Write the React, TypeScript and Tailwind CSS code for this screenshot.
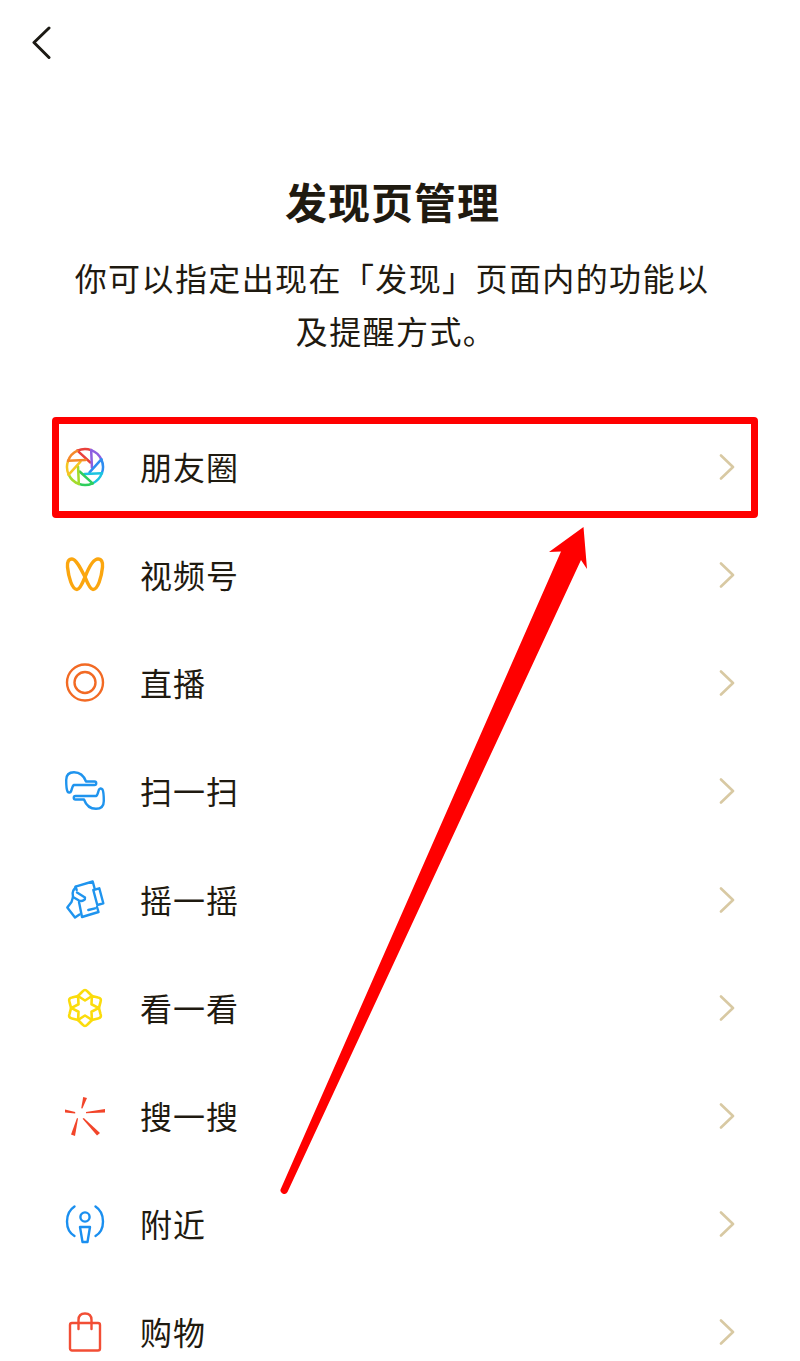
const CJK = "font-['Noto_Sans_CJK_SC','Noto_Sans',sans-serif]";

/* ── ICONS ── all drawn on a 40x40 box */
function Aperture() {
  const colors = ["#e9413c", "#8e5fe0", "#2f8df0", "#1cc4e0", "#2fce5c", "#a4dc2c", "#f6c623", "#f68a2a"];
  const pt = (r: number, deg: number) => {
    const a = (deg * Math.PI) / 180;
    return `${(20 + r * Math.cos(a)).toFixed(2)} ${(20 + r * Math.sin(a)).toFixed(2)}`;
  };
  return (
    <svg viewBox="0 0 40 40" className="w-10 h-10" fill="none" strokeWidth="2.5" strokeLinecap="round">
      {colors.map((c, i) => {
        const start = -115 + i * 45;
        return (
          <g key={c} stroke={c}>
            <path d={`M${pt(18, start)} A18 18 0 0 1 ${pt(18, start + 45)}`} />
            <path d={`M${pt(18, start)} L${pt(7, start + 75)}`} />
          </g>
        );
      })}
    </svg>
  );
}

function Channels() {
  return (
    <svg viewBox="0 0 40 40" className="w-10 h-10" fill="none" stroke="#fba60f" strokeWidth="3.4" strokeLinecap="round" strokeLinejoin="round">
      <path d="M20 22C16 14 11 4 7 4C3.5 4 2 7 2.5 12C3.5 22 7 34.5 12 34.5C15 34.5 18 27 20 22C22 17 27 4 33 4C36.5 4 38 7 37.5 12C36.5 22 33 34.5 28 34.5C25 34.5 22 27 20 22Z" />
    </svg>
  );
}

function Live() {
  return (
    <svg viewBox="0 0 40 40" className="w-10 h-10" fill="none" stroke="#f26a24" strokeWidth="2.4">
      <circle cx="20" cy="19.5" r="18" />
      <circle cx="20" cy="19.5" r="10.5" />
    </svg>
  );
}

function Scan() {
  const d = "M29.5 10.5H21C19 5 15 1.2 9 1.2C4 1.2 1.2 4 1.2 9C1.2 13 1.2 18 2.5 20.5C3.5 22 5.5 22 6.2 20C7 17.5 7.5 14.5 9 14H29.5A1.75 1.75 0 0 0 29.5 10.5Z";
  return (
    <svg viewBox="0 0 40 40" className="w-10 h-10" fill="none" stroke="#1f94ee" strokeWidth="2.4" strokeLinejoin="round">
      <path d={d} />
      <path d={d} transform="rotate(180 20 19.5)" />
    </svg>
  );
}

function Shake() {
  return (
    <svg viewBox="0 0 40 40" className="w-10 h-10" fill="none" stroke="#1f94ee" strokeWidth="2.4" strokeLinejoin="round" strokeLinecap="round">
      <path d="M11.7 10L10.5 6.7L27.7 1.5L29.5 8" />
      <path d="M14 22L17 37L33.5 32L32 27" />
      <path d="M28.3 10L34.3 8.3L38.3 23.3L32.3 25Z" />
      <path d="M11 6.7L8.3 10.5C7.5 12 7.5 15 8 17L6.5 22L2.3 27.5L10 37.5L14.5 34.5" />
      <path d="M12 12.5L20 17.5C20.5 19.5 18 22 14 20.5L8 17" />
      <path d="M23.3 30L30 28.3" />
    </svg>
  );
}

function Star() {
  return (
    <svg viewBox="0 0 40 40" className="w-10 h-10" fill="none" stroke="#fbdc0c" strokeWidth="2.6" strokeLinejoin="round">
      {[0, 60, 120, 180, 240, 300].map((r) => (
        <path key={r} d="M17.5 3.5Q20 0.5 22.5 3.5L27 8L20 12.5L13 8Z" transform={`rotate(${r} 20 20)`} />
      ))}
    </svg>
  );
}

function Search() {
  return (
    <svg viewBox="0 0 40 40" className="w-10 h-10" fill="#f2452a">
      <polygon points="16.2,12.3 17.4,12.6 22,1.9 18.2,1" />
      <polygon points="21,16.1 21,17.3 40.4,16.6 40,13" />
      <polygon points="17.6,22.8 18.8,22 35,37 32,39.6" />
      <polygon points="12,22 13,22.4 10,40 6,38.4" />
      <polygon points="0,13.4 0,16.6 10.2,17.4 10.2,16" />
    </svg>
  );
}

function Nearby() {
  return (
    <svg viewBox="0 0 40 40" className="w-10 h-10" fill="none" stroke="#1a8ff0" strokeWidth="2.4" strokeLinecap="round" strokeLinejoin="round">
      <path d="M9.5 2.5C-0.5 9 -0.5 26 9.5 32" />
      <path d="M30.5 2.5C40.5 9 40.5 26 30.5 32" />
      <circle cx="20" cy="13" r="4.6" />
      <path d="M15 23H25L22.5 38H17.5Z" />
    </svg>
  );
}

function Bag() {
  return (
    <svg viewBox="0 0 40 40" className="w-10 h-10" fill="none" stroke="#f24e35" strokeWidth="2.4" strokeLinecap="round" strokeLinejoin="round">
      <rect x="5" y="11" width="30" height="27.5" rx="2" />
      <path d="M13.5 17V8C13.5 4 16 1.5 20 1.5C24 1.5 26.5 4 26.5 8V17" />
    </svg>
  );
}

const rows = [
  { label: "朋友圈", Icon: Aperture },
  { label: "视频号", Icon: Channels },
  { label: "直播", Icon: Live },
  { label: "扫一扫", Icon: Scan },
  { label: "摇一摇", Icon: Shake },
  { label: "看一看", Icon: Star },
  { label: "搜一搜", Icon: Search },
  { label: "附近", Icon: Nearby },
  { label: "购物", Icon: Bag },
];

export default function App() {
  return (
    <main className={`relative w-[800px] h-[1361px] overflow-hidden bg-white text-[#1f1a10] ${CJK}`}>
      {/* Back */}
      <div className="pl-[31px] pt-[26px] h-[171px]">
        <svg viewBox="0 0 22 34" className="w-[22px] h-[34px]" fill="none" stroke="#1c1a14" strokeWidth="3" strokeLinecap="round" strokeLinejoin="round">
          <path d="M18 2L3 16.5L18 31.5" />
        </svg>
      </div>

      {/* Heading */}
      <h1 className="h-[60px] pr-[15px] text-center text-[42px] leading-[60px] font-bold tracking-[1px]">发现页管理</h1>
      <p className="mt-[20px] text-center text-[32px] leading-[53px] tracking-[1.4px]">
        <span className="block pr-[16px]">你可以指定出现在「发现」页面内的功能以</span>
        <span className="block pr-[8px]">及提醒方式。</span>
      </p>

      {/* List */}
      <ul className="mt-[56px]">
        {rows.map(({ label, Icon }) => (
          <li key={label} className="flex items-center h-[108.125px] pl-[65px] pr-[65px]">
            <Icon />
            <span className="ml-[35px] pb-[2px] flex-1 text-[32px] tracking-[1px]">{label}</span>
            <svg viewBox="0 0 16 26" className="w-4 h-[26px]" fill="none" stroke="#d8c9a3" strokeWidth="2.6" strokeLinecap="round" strokeLinejoin="round">
              <path d="M2 1.5L14 13L2 24.5" />
            </svg>
          </li>
        ))}
      </ul>

      {/* Annotation: box around the first row */}
      <div className="absolute left-[52px] top-[417px] w-[706px] h-[101px] border-[7px] border-[#ff0000] rounded-[4px]" />

      {/* Annotation: arrow */}
      <svg viewBox="0 0 800 1361" className="absolute inset-0 w-[800px] h-[1361px]" fill="#ff0000">
        <path d="M583.5 527L549 552L561 551.5L281 1188.5A3.4 3.4 0 0 0 287.5 1192L581 560L587 569Z" />
      </svg>
    </main>
  );
}
